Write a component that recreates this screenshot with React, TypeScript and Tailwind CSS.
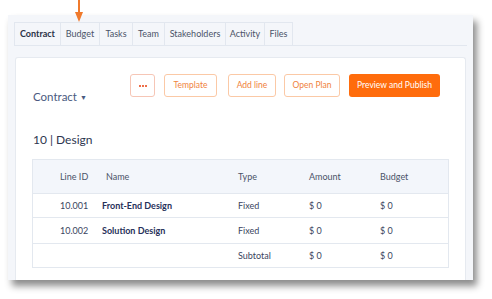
import React from 'react';

const tabs = [
  { label: 'Contract', w: 46, active: true },
  { label: 'Budget', w: 39 },
  { label: 'Tasks', w: 33 },
  { label: 'Team', w: 32 },
  { label: 'Stakeholders', w: 61 },
  { label: 'Activity', w: 39 },
  { label: 'Files', w: 29 },
];

const rows = [
  { id: '10.001', name: 'Front-End Design', type: 'Fixed', amount: '$ 0', budget: '$ 0', h: 'h-[24px]' },
  { id: '10.002', name: 'Solution Design', type: 'Fixed', amount: '$ 0', budget: '$ 0', h: 'h-[26px]' },
];

const cols = 'grid grid-cols-[42px_136px_71px_71px_1fr] items-center pl-[27px]';

export default function App() {
  return (
    <div className="relative h-[299px] w-[492px] overflow-hidden bg-white font-['Lato',sans-serif] text-[#3a4560]">
      {/* arrow pointing at Budget tab */}
      <svg className="absolute left-[74px] top-0 z-10" width="10" height="23" viewBox="0 0 10 23">
        <line x1="5" y1="0" x2="5" y2="14" stroke="#f07a2c" strokeWidth="2" />
        <polygon points="1,12 9,12 5,22" fill="#f07a2c" />
      </svg>

      <div className="pl-[8px] pt-[15px]">
        <div className="flex h-[265px] w-[465px] flex-col bg-[#f4f6fa] pt-[7px] shadow-[4px_6px_7px_rgba(0,0,0,0.45)]">
          <div className="mx-[6px] flex h-[24px] border-b border-[#e2e7ef]">
            {tabs.map(t => (
              <div
                key={t.label}
                style={{ width: t.w }}
                className={`flex items-center justify-center border-l border-t border-[#e2e7ef] text-[9px] last:border-r ${t.active ? 'font-bold text-[#2b3247]' : 'text-[#4a5368]'}`}
              >
                {t.label}
              </div>
            ))}
          </div>

          <div className="mx-[7px] mt-[11px] flex-1 rounded-t-[3px] border border-b-0 border-[#e6eaf0] bg-white">
            <div className="flex pt-[16px]">
              <div className="pl-[17px] pt-[14px] text-[11.5px] text-[#4a5a80]">
                Contract <span className="relative top-[-1px] text-[7px]">▼</span>
              </div>
              <div className="ml-auto mr-[25px] flex h-[23px] text-[8.5px] text-[#f0823c]">
                <button className="flex w-[25px] items-center justify-center rounded-[3px] border border-[#f6c6b6]">
                  <svg width="8" height="2" viewBox="0 0 8 2">
                    <rect x="0" y="0" width="2" height="2" fill="#ee6f4a" />
                    <rect x="3" y="0" width="2" height="2" fill="#ee6f4a" />
                    <rect x="6" y="0" width="2" height="2" fill="#ee6f4a" />
                  </svg>
                </button>
                <button className="ml-[9px] w-[53px] rounded-[3px] border border-[#fbc9a6]">Template</button>
                <button className="ml-[11px] w-[48px] rounded-[3px] border border-[#fbc9a6]">Add line</button>
                <button className="ml-[8px] w-[56px] rounded-[3px] border border-[#fbc9a6]">Open Plan</button>
                <button className="ml-[9px] w-[91px] rounded-[3px] bg-[#ff6c0c] text-white">Preview and Publish</button>
              </div>
            </div>

            <div className="pl-[17px] pt-[26px] text-[12px] text-[#2d3650]">10 | Design</div>

            <div className="mx-[16px] mt-[10px] border border-[#e3e8ef] text-[9px]">
              <div className={`${cols} h-[34px] border-b border-[#e3e8ef] bg-[#f3f6fb] text-[#4a5368]`}>
                <span>Line ID</span>
                <span className="pl-[4px]">Name</span>
                <span>Type</span>
                <span>Amount</span>
                <span>Budget</span>
              </div>
              {rows.map(r => (
                <div key={r.id} className={`${cols} ${r.h} border-b border-[#e3e8ef]`}>
                  <span>{r.id}</span>
                  <span className="font-bold text-[#27315a]">{r.name}</span>
                  <span>{r.type}</span>
                  <span>{r.amount}</span>
                  <span>{r.budget}</span>
                </div>
              ))}
              <div className={`${cols} h-[23px]`}>
                <span />
                <span />
                <span>Subtotal</span>
                <span>$ 0</span>
                <span>$ 0</span>
              </div>
            </div>
          </div>
        </div>
      </div>
    </div>
  );
}
